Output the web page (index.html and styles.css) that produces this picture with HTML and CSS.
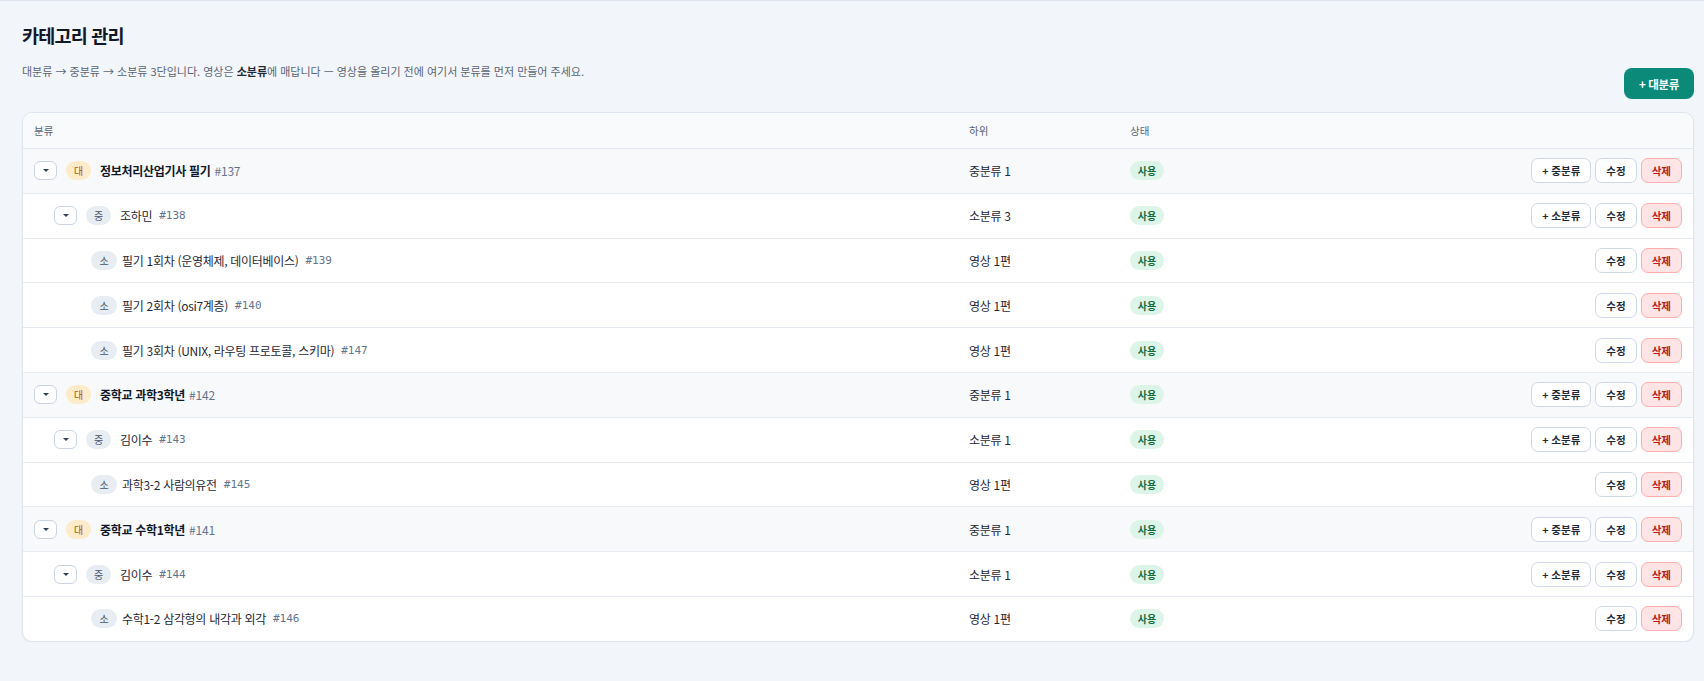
FILE: index.html
```
<!DOCTYPE html>
<html lang="ko">
<head>
    <title>카테고리 관리</title>
    <meta charset="utf-8">
    <meta name="viewport" content="width=device-width, initial-scale=1">
    <link rel="stylesheet" href="styles.css">
</head>
<body>
    <div class="page">
        <div class="page-head">
            <div class="head-text">
                <h1>카테고리 관리</h1>
                <p class="subtitle">대분류 → 중분류 → 소분류 3단입니다. 영상은 <b>소분류</b>에 매답니다 — 영상을 올리기 전에 여기서 분류를 먼저 만들어 주세요.</p>
            </div>
            <button class="primary-btn">+ 대분류</button>
        </div>

        <div class="card">
            <table class="cat-table">
                <colgroup>
                    <col class="col-name">
                    <col class="col-sub">
                    <col class="col-state">
                    <col>
                </colgroup>
                <thead>
                    <tr>
                        <th>분류</th>
                        <th>하위</th>
                        <th>상태</th>
                        <th></th>
                    </tr>
                </thead>
                <tbody>
                    <tr class="lv0">
                        <td><div class="name-cell"><span class="toggle"></span><span class="badge badge-l">대</span><span class="name">정보처리산업기사 필기</span><span class="cid">#137</span></div></td>
                        <td>중분류 1</td>
                        <td><span class="state">사용</span></td>
                        <td><div class="actions"><button class="btn">+ 중분류</button><button class="btn">수정</button><button class="btn btn-del">삭제</button></div></td>
                    </tr>
                    <tr class="lv1">
                        <td><div class="name-cell"><span class="toggle"></span><span class="badge">중</span><span class="name">조하민</span><span class="cid">#138</span></div></td>
                        <td>소분류 3</td>
                        <td><span class="state">사용</span></td>
                        <td><div class="actions"><button class="btn">+ 소분류</button><button class="btn">수정</button><button class="btn btn-del">삭제</button></div></td>
                    </tr>
                    <tr class="lv2">
                        <td><div class="name-cell"><span class="badge">소</span><span class="name">필기 1회차 (운영체제, 데이터베이스)</span><span class="cid">#139</span></div></td>
                        <td>영상 1편</td>
                        <td><span class="state">사용</span></td>
                        <td><div class="actions"><button class="btn">수정</button><button class="btn btn-del">삭제</button></div></td>
                    </tr>
                    <tr class="lv2">
                        <td><div class="name-cell"><span class="badge">소</span><span class="name">필기 2회차 (osi7계층)</span><span class="cid">#140</span></div></td>
                        <td>영상 1편</td>
                        <td><span class="state">사용</span></td>
                        <td><div class="actions"><button class="btn">수정</button><button class="btn btn-del">삭제</button></div></td>
                    </tr>
                    <tr class="lv2">
                        <td><div class="name-cell"><span class="badge">소</span><span class="name">필기 3회차 (UNIX, 라우팅 프로토콜, 스키마)</span><span class="cid">#147</span></div></td>
                        <td>영상 1편</td>
                        <td><span class="state">사용</span></td>
                        <td><div class="actions"><button class="btn">수정</button><button class="btn btn-del">삭제</button></div></td>
                    </tr>
                    <tr class="lv0">
                        <td><div class="name-cell"><span class="toggle"></span><span class="badge badge-l">대</span><span class="name">중학교 과학3학년</span><span class="cid">#142</span></div></td>
                        <td>중분류 1</td>
                        <td><span class="state">사용</span></td>
                        <td><div class="actions"><button class="btn">+ 중분류</button><button class="btn">수정</button><button class="btn btn-del">삭제</button></div></td>
                    </tr>
                    <tr class="lv1">
                        <td><div class="name-cell"><span class="toggle"></span><span class="badge">중</span><span class="name">김이수</span><span class="cid">#143</span></div></td>
                        <td>소분류 1</td>
                        <td><span class="state">사용</span></td>
                        <td><div class="actions"><button class="btn">+ 소분류</button><button class="btn">수정</button><button class="btn btn-del">삭제</button></div></td>
                    </tr>
                    <tr class="lv2">
                        <td><div class="name-cell"><span class="badge">소</span><span class="name">과학3-2 사람의유전</span><span class="cid">#145</span></div></td>
                        <td>영상 1편</td>
                        <td><span class="state">사용</span></td>
                        <td><div class="actions"><button class="btn">수정</button><button class="btn btn-del">삭제</button></div></td>
                    </tr>
                    <tr class="lv0">
                        <td><div class="name-cell"><span class="toggle"></span><span class="badge badge-l">대</span><span class="name">중학교 수학1학년</span><span class="cid">#141</span></div></td>
                        <td>중분류 1</td>
                        <td><span class="state">사용</span></td>
                        <td><div class="actions"><button class="btn">+ 중분류</button><button class="btn">수정</button><button class="btn btn-del">삭제</button></div></td>
                    </tr>
                    <tr class="lv1">
                        <td><div class="name-cell"><span class="toggle"></span><span class="badge">중</span><span class="name">김이수</span><span class="cid">#144</span></div></td>
                        <td>소분류 1</td>
                        <td><span class="state">사용</span></td>
                        <td><div class="actions"><button class="btn">+ 소분류</button><button class="btn">수정</button><button class="btn btn-del">삭제</button></div></td>
                    </tr>
                    <tr class="lv2">
                        <td><div class="name-cell"><span class="badge">소</span><span class="name">수학1-2 삼각형의 내각과 외각</span><span class="cid">#146</span></div></td>
                        <td>영상 1편</td>
                        <td><span class="state">사용</span></td>
                        <td><div class="actions"><button class="btn">수정</button><button class="btn btn-del">삭제</button></div></td>
                    </tr>
                </tbody>
            </table>
        </div>
    </div>
</body>
</html>
```

FILE: styles.css
```
body {
    margin: 0;
    background: #f2f5fa;
    border-top: 1px solid #dde3ec;
    font-family: "Noto Sans CJK KR", "Noto Sans", sans-serif;
    color: #1f2937;
}
.page {
    padding: 21px 10px 0 22px;
}
.page-head {
    display: flex;
    justify-content: space-between;
    align-items: flex-end;
    margin-bottom: 13px;
}
h1 {
    margin: 0;
    font-size: 18.5px;
    line-height: 26px;
    font-weight: 700;
    letter-spacing: -0.8px;
    color: #111827;
}
.subtitle {
    margin: 14px 0 19px;
    font-size: 11px;
    line-height: 18px;
    color: #5b6576;
}
.subtitle b {
    color: #1f2937;
    font-weight: 700;
}
.primary-btn {
    height: 31px;
    width: 70px;
    border: none;
    border-radius: 8px;
    background: #0b8a7a;
    color: #ffffff;
    font-family: inherit;
    font-size: 11.5px;
    font-weight: 700;
    letter-spacing: -0.3px;
    cursor: pointer;
}
.card {
    background: #ffffff;
    border: 1px solid #dfe5ee;
    border-radius: 10px;
    overflow: hidden;
    box-shadow: 0 1px 2px rgba(15, 23, 42, 0.05);
}
.cat-table {
    width: 100%;
    border-collapse: collapse;
    table-layout: fixed;
}
.col-name { width: 935px; }
.col-sub { width: 161px; }
.col-state { width: 181px; }
.cat-table th {
    height: 35px;
    padding: 0 11px;
    text-align: left;
    font-size: 10.5px;
    font-weight: 400;
    color: #5b6576;
    background: #f8fafc;
    border-bottom: 1px solid #e3e8f0;
}
.cat-table td {
    height: 43.8px;
    padding: 0 11px;
    font-size: 12px;
    letter-spacing: -0.3px;
    color: #1f2937;
    border-bottom: 1px solid #e6ebf2;
}
.cat-table tbody tr:last-child td {
    border-bottom: none;
}
.lv0 td {
    background: #f7f9fb;
}
.name-cell {
    display: flex;
    align-items: center;
}
.lv1 .name-cell { padding-left: 20px; }
.lv2 .name-cell { padding-left: 57px; }
.toggle {
    width: 21px;
    height: 17px;
    border: 1px solid #cbd4e1;
    border-radius: 6px;
    background: #ffffff;
    margin-right: 9px;
    display: flex;
    align-items: center;
    justify-content: center;
}
.toggle::after {
    content: '';
    border-left: 3px solid transparent;
    border-right: 3px solid transparent;
    border-top: 3px solid #334155;
}
.badge {
    width: 25px;
    height: 19px;
    border-radius: 10px;
    background: #e8edf4;
    color: #475569;
    font-size: 10px;
    letter-spacing: 0;
    display: flex;
    align-items: center;
    justify-content: center;
    margin-right: 9px;
}
.lv2 .badge {
    width: 26px;
    margin-right: 5px;
}
.badge-l {
    background: #fdebc9;
    color: #b45309;
}
.name {
    color: #1f2937;
}
.lv0 .name {
    font-weight: 700;
    color: #111827;
}
.cid {
    margin-left: 7px;
    font-family: "DejaVu Sans Mono", monospace;
    font-size: 11px;
    letter-spacing: 0;
    color: #64748b;
}
.lv0 .cid {
    margin-left: 4px;
    font-family: "Noto Sans CJK KR", sans-serif;
    font-size: 12px;
    letter-spacing: -0.2px;
}
.state {
    display: inline-flex;
    align-items: center;
    justify-content: center;
    width: 34px;
    height: 19px;
    border-radius: 10px;
    background: #dcf5e8;
    color: #166b3e;
    font-size: 10px;
    font-weight: 700;
    letter-spacing: 0;
}
.actions {
    display: flex;
    justify-content: flex-end;
    gap: 4px;
}
.btn {
    height: 25px;
    padding: 0 10px;
    border: 1px solid #cfd8e4;
    border-radius: 7px;
    background: #ffffff;
    color: #1f2937;
    font-family: inherit;
    font-size: 10.5px;
    font-weight: 700;
    letter-spacing: 0;
    cursor: pointer;
}
.btn-del {
    background: #fee4e4;
    border-color: #fcaeae;
    color: #b91c1c;
}
```
